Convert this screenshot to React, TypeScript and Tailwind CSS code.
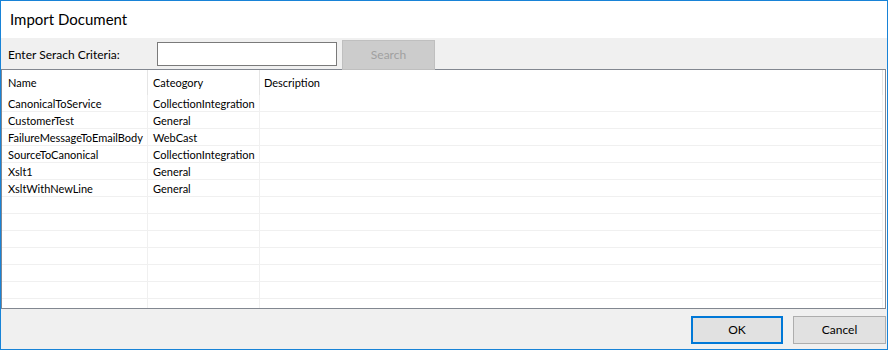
import React from 'react';

const rows = [
  { name: 'CanonicalToService', category: 'CollectionIntegration', description: '' },
  { name: 'CustomerTest', category: 'General', description: '' },
  { name: 'FailureMessageToEmailBody', category: 'WebCast', description: '' },
  { name: 'SourceToCanonical', category: 'CollectionIntegration', description: '' },
  { name: 'Xslt1', category: 'General', description: '' },
  { name: 'XsltWithNewLine', category: 'General', description: '' },
];

// pad out the grid with empty rows like the WinForms grid does
const allRows = [...rows, ...Array.from({ length: 7 }, () => ({ name: '', category: '', description: '' }))];

const App: React.FC = () => {
  return (
    <div
      className="w-[888px] h-[350px] flex flex-col border border-[#1883d7] bg-white text-[12px] text-black overflow-hidden"
      style={{ fontFamily: 'Lato, "Liberation Sans", Arial, sans-serif' }}
    >
      {/* Title */}
      <div className="h-[37px] flex items-center pl-[9px] bg-white text-[15px] shrink-0">Import Document</div>

      {/* Search bar */}
      <div className="h-[31px] flex items-start bg-[#f0f0f0] shrink-0">
        <span className="mt-[8px] ml-[7px] w-[149px]">Enter Serach Criteria:</span>
        <input
          type="text"
          className="mt-[4px] w-[180px] h-[24px] border border-[#7a7a7a] bg-white outline-none"
        />
        <button
          type="button"
          disabled
          className="relative z-10 mt-[2px] ml-[5px] w-[93px] h-[30px] border border-[#bfbfbf] bg-[#cccccc] text-[#a0a0a0]"
        >
          Search
        </button>
      </div>

      {/* Grid */}
      <div className="flex-1 mr-[1px] border border-[#828790] bg-white overflow-hidden min-h-0 text-[11px]">
        <div className="grid grid-cols-[146px_112px_623px] h-[25px]">
          <div className="flex items-center pl-[6px] pt-[2px] border-r border-[#e5e5e5]">Name</div>
          <div className="flex items-center pl-[5px] pt-[2px] border-r border-[#e5e5e5]">Cateogory</div>
          <div className="flex items-center pl-[4px] pt-[2px] border-r border-[#e5e5e5]">Description</div>
        </div>
        {allRows.map((r, i) => (
          <div key={i} className="grid grid-cols-[146px_112px_623px] h-[17px]">
            <div className="flex items-center pl-[6px] pt-[2px] border-r border-b border-[#f0f0f0] whitespace-nowrap overflow-hidden">{r.name}</div>
            <div className="flex items-center pl-[5px] pt-[2px] border-r border-b border-[#f0f0f0] whitespace-nowrap overflow-hidden">{r.category}</div>
            <div className="flex items-center pl-[4px] pt-[2px] border-r border-b border-[#f0f0f0]">{r.description}</div>
          </div>
        ))}
      </div>

      {/* Footer buttons */}
      <div className="h-[40px] shrink-0 bg-[#f0f0f0] flex items-start justify-end pt-[7px] pr-[1px] gap-[10px]">
        <button type="button" className="w-[92px] h-[28px] border-2 border-[#0078d7] bg-[#e1e1e1]">
          OK
        </button>
        <button type="button" className="w-[93px] h-[28px] border border-[#adadad] bg-[#e1e1e1]">
          Cancel
        </button>
      </div>
    </div>
  );
};

export default App;
